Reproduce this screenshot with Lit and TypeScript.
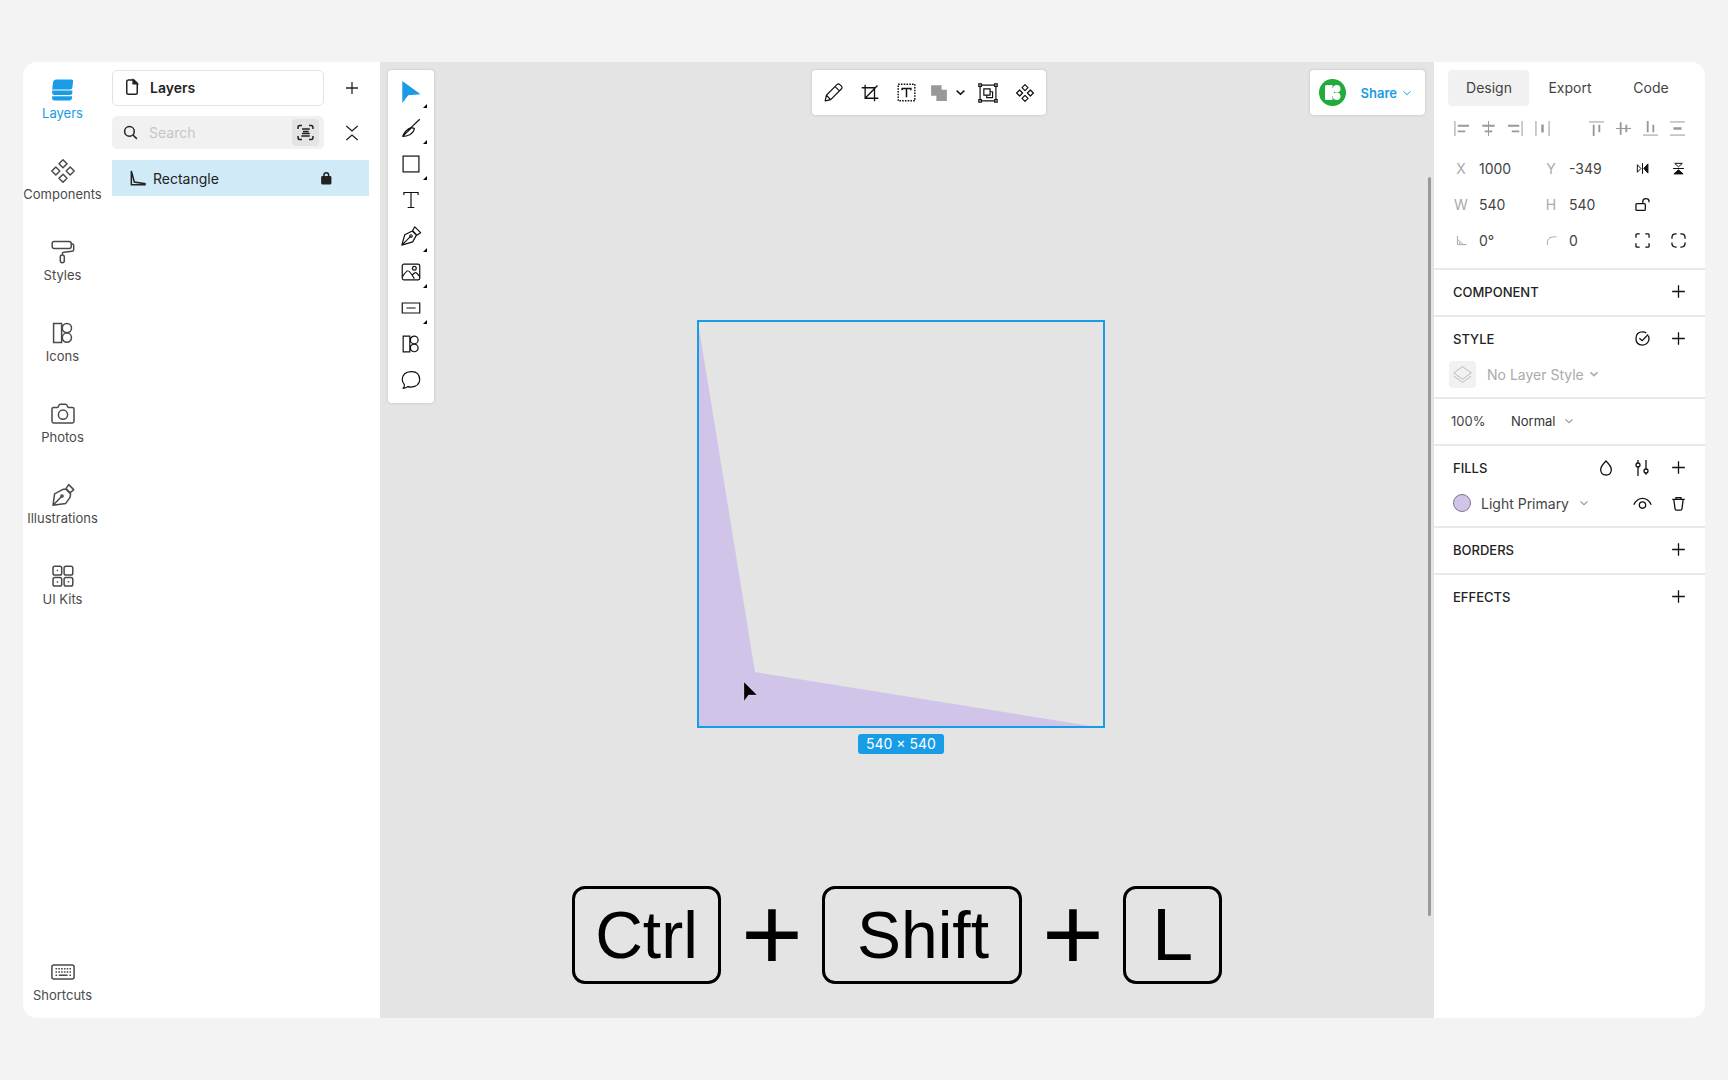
import { LitElement, html, css, svg, type TemplateResult } from "lit";
import { customElement, property, state } from "lit/decorators.js";

const kitTile = svg`<path d="M2.6 2.5h8v19h-8zM15.900 2.500a4.600 4.600 0 1 1 0 9.200 4.600 4.600 0 0 1 0-9.200zM15.900 12.100a4.600 4.600 0 1 1 0 9.200 4.600 4.600 0 0 1 0-9.200z"/>`;
const diamonds = svg`<path d="M12 .8l4 4-4 4-4-4zM12 15.200l4 4-4 4-4-4zM4.800 8l4 4-4 4-4-4zM19.200 8l4 4-4 4-4-4z" stroke-linejoin="round"/>`;

const ICONS: Record<string, TemplateResult> = {
  layers: svg`<g fill="currentColor" stroke="none"><path d="M5.500 1.500H20q2.500 0 2 2.500l-.6 5.500q-.3 1.900-2.400 1.900H1.200L2 4.500q.4-3 3.500-3z"/><path d="M1.100 12.600H21.500l-.3 2.600q-.3 1.900-2.400 1.900H3.500q-2.400 0-2.400-2.400z"/><path d="M1.100 18.300H21.200l-.3 2.200q-.4 2-2.500 2H3.500q-2.400 0-2.400-2.200z"/></g>`,
  components: diamonds,
  styles: svg`<rect x="1.200" y="1.500" width="19" height="7" rx="2"/><path d="M20.200 4h1q1.500 0 1.500 1.600v4q0 1.500-1.500 1.700l-8.500 1q-1.300.2-1.300 1.400v1.300"/><rect x="9.300" y="15" width="4" height="7.800" rx="2"/>`,
  icons: kitTile,
  photos: svg`<path d="M2.600 5.500h3.600q.8 0 1.100-.8l.4-1Q8.200 2.300 9.500 2.300h5q1.300 0 1.800 1.400l.4 1q.3.800 1.100.800h3.600q1.600 0 1.600 1.600v12.200q0 1.600-1.600 1.600H2.600Q1 20.900 1 19.300V7.100q0-1.600 1.600-1.600z"/><circle cx="12" cy="12.700" r="4.600"/>`,
  illustrations: svg`<path d="M2 22.300l1.600-11.500 7.800-4.200 3.400-.5 4.800 5-.6 3.300-4.200 6zM2 22.300l8.600-8.800M15 5.600l2.700-4 5 5-3.500 3.200z" stroke-linejoin="round"/><circle cx="11" cy="13" r="1.100"/>`,
  kits: svg`<rect x="2" y="2.300" width="8.700" height="8.700" rx="1.800"/><rect x="13.100" y="2.300" width="8.700" height="8.700" rx="1.800"/><rect x="2" y="13.400" width="8.700" height="8.700" rx="1.800"/><rect x="13.100" y="13.400" width="8.700" height="8.700" rx="1.800"/><path d="M5.700 6.600h1.400M5.700 18h1.400M16.700 17.700h1.500"/>`,
  keyboard: svg`<rect x=".9" y="5" width="22.200" height="14" rx="2"/><path d="M4.500 8.800h15.500M4.500 12h15.500" stroke-dasharray="1.600 1.200"/><path d="M4.500 15.200h1.600M7.800 15.200h8.800M18.400 15.200H20"/>`,
  file: svg`<path d="M6.500 2.500h8L19 7v12.500q0 2-2 2H7q-2 0-2-2V4.500q0-2 2-2z"/><path d="M13.500 2.500v5h5.500z" fill="currentColor"/>`,
  plus: svg`<path d="M12 4v16M4 12h16"/>`,
  search: svg`<circle cx="10.500" cy="10.500" r="6.800"/><path d="M15.500 15.500l5.500 5.500"/>`,
  scan: svg`<path d="M1.500 7V4.500q0-2.500 2.500-2.500h3M17 2h3q2.500 0 2.500 2.500V7M22.500 17v2.500q0 2.500-2.500 2.500h-3M7 22H4q-2.500 0-2.500-2.500V17M7 7h11M8.500 10.500h8M7 13.500h11M6 17h12"/>`,
  collapse: svg`<path d="M3.500 1.500L12 9l8.500-7.500M3.500 22.500L12 15l8.500 7.500"/>`,
  lock: svg`<rect x="5" y="10" width="15" height="12" rx="1" fill="currentColor"/><path d="M8.500 10V7q0-4 4-4t4 4v3"/>`,
  corner: svg`<path d="M2 1.500v20.500h20.500v-1.500L6.500 18z"/>`,
  cursor: svg`<path d="M2.500 0v24l6.500-8.500 13.500-1z" fill="currentColor" stroke="none"/>`,
  knife: svg`<path d="M22.500 1.500L11 12.500M2 22q3-7.500 10-10.500l4 1q-.5 4.500-5.500 7.500-4 2-8.500 2zM2 22l10-9.500" stroke-linejoin="round"/>`,
  square: svg`<rect x="2.500" y="2.500" width="19" height="19"/>`,
  text: svg`<path d="M3.500 6V3h17v3M12 3v18M8 21h8"/>`,
  pen: svg`<path d="M1 23L4.500 10.500l9-4.500 5 5-4.500 8zM1 23L11.500 12.500M14 5.500l2.500-4.500L23.500 8l-4.500 3z" stroke-linejoin="round"/><circle cx="12" cy="12" r="1.500"/>`,
  image: svg`<rect x="1.500" y="2.500" width="21" height="19" rx="2"/><circle cx="16" cy="7.500" r="2.300"/><path d="M1.500 18q5-8 7-7.500 2 .2 7.500 9.500M13 16q3-3.500 4.500-3.300 1.500 0 5 5"/>`,
  button: svg`<path d="M1.500 6h21v12h-21zM6.500 12h11"/>`,
  comment: svg`<path d="M2.500 22q2-1.500 1.500-4.500-2.500-3-2.500-6Q2 2.500 12 2t10.500 9.500Q22 20 12 20.500q-1.800 0-3.500-.6-2.500 2-6 2.100z" stroke-linejoin="round"/>`,
  pencil: svg`<path d="M1.500 22.500l1.500-7L17 1.500q1.500-1 3 .5l2 2q1.500 1.500.5 3L8.500 21zM14 4.500l5.500 5.500M3 15.500l5.500 5.500" stroke-linejoin="round"/>`,
  crop: svg`<path d="M1 5H18v18M5.500 1V19h17.500M5.500 19L22 2"/>`,
  textbox: svg`<rect x="1.500" y="1.500" width="21" height="21" stroke-dasharray="2 1.500"/><path d="M6.500 9V7h11v2M12 7v11"/>`,
  union: svg`<path d="M1.500 1.500h14v6h7v15h-14v-7h-7z" fill="#999" stroke="none"/>`,
  frame: svg`<path d="M2.500 2.500h19v19h-19z"/><path d="M7 7h7.500v7.500H7zM10.500 14.500v3h7v-7h-3"/><g fill="#fff"><path d="M1 1h3v3H1zM20 1h3v3h-3zM1 20h3v3H1zM20 20h3v3h-3z"/></g>`,
  chevron: svg`<path d="M3.500 8l8.500 8 8.500-8"/>`,
  alignL: svg`<path d="M1.500 0v24"/><path d="M6 7.500h18M6 16.500h12" stroke-width="3"/>`,
  alignC: svg`<path d="M12 0v24"/><path d="M2 7.500h20M6 16.500h12" stroke-width="3"/>`,
  alignR: svg`<path d="M22.500 0v24"/><path d="M0 7.500h18M6 16.500h12" stroke-width="3"/>`,
  spreadH: svg`<path d="M1.500 0v24M22.500 0v24"/><path d="M12 5.500v13" stroke-width="4"/>`,
  flipH: svg`<path d="M2.500 5v14L9 12zM12 2v20"/><path d="M22 3.500v17L14.500 12z" fill="currentColor"/>`,
  unlock: svg`<rect x="1.500" y="10.500" width="15" height="11" rx="1.500"/><path d="M12.500 10.500V7q0-4.500 5-4.500t5 4.500v1.500"/>`,
  angle: svg`<path d="M3 2v19h20M3 9l13 12M9 15l-1.500 6"/>`,
  radius: svg`<path d="M3 22V18Q3 4 17 4h6"/>`,
  corners: svg`<path d="M1.500 7.500V3q0-1.500 1.500-1.500h4.500M16.500 1.500H21q1.500 0 1.500 1.500v4.500M22.500 16.500V21q0 1.500-1.500 1.500h-4.500M7.500 22.500H3q-1.500 0-1.500-1.500v-4.500"/>`,
  rounded: svg`<path d="M1.500 9V7.500q0-6 6-6H9M15 1.500h1.500q6 0 6 6V9M22.500 15v1.500q0 6-6 6H15M9 22.500H7.500q-6 0-6-6V15"/>`,
  check: svg`<path d="M21.500 7.500q1.800 4.500 0 9Q18.500 22.500 12 22.500 1.500 22 1.500 12 2 1.500 12 1.500q3.500 0 6 1.800M7 11.500l4.500 4L21 5.500"/>`,
  stack: svg`<path d="M12 2l11 8-11 8-11-8zM1 14l11 8 11-8" stroke-linejoin="round"/>`,
  drop: svg`<path d="M12 1.500Q4 9.500 4 14.500q.5 8 8 8t8-8q0-5-8-13z"/>`,
  sliders: svg`<path d="M6 0v4.500M6 10v14M18 0v13.500M18 19v3"/><circle cx="6" cy="7.500" r="3"/><circle cx="18" cy="16.500" r="3"/>`,
  eye: svg`<path d="M1 13.500Q5 5.500 12 5.500t11 8"/><circle cx="12" cy="14" r="4"/>`,
  trash: svg`<path d="M2 5.500h20M8 5V2.500h8V5M4.500 5.500l2 15q.3 2 2 2h7q1.700 0 2-2l2-15"/>`,
};

@customElement("ui-icon")
class UiIcon extends LitElement {
  @property() name = "";
  @property({ type: Number }) size = 18;
  @property({ type: Number }) weight = 1.5;
  @property({ type: Boolean }) swap = false;

  static styles = css`
    :host { display: inline-flex; flex: none; }
    svg { display: block; overflow: visible; fill: none; stroke: currentColor; }
  `;

  render() {
    return html`<svg width=${this.size} height=${this.size} viewBox="0 0 24 24" stroke-width=${(this.weight * 24) / this.size} aria-hidden="true">
      <g transform=${this.swap ? "matrix(0 1 1 0 0 0)" : "matrix(1 0 0 1 0 0)"}>${ICONS[this.name]}</g>
    </svg>`;
  }
}

const shared = css`
  * { box-sizing: border-box; }
  button { font: inherit; color: inherit; background: none; border: 0; padding: 0; margin: 0; display: flex; align-items: center; justify-content: center; cursor: pointer; }
  input { font: inherit; color: inherit; background: none; border: 0; padding: 0; margin: 0; min-width: 0; outline: none; }
`;

@customElement("side-nav")
class SideNav extends LitElement {
  @state() private active = "Layers";

  private items = [
    ["layers", "Layers"],
    ["components", "Components"],
    ["styles", "Styles"],
    ["icons", "Icons"],
    ["photos", "Photos"],
    ["illustrations", "Illustrations"],
    ["kits", "UI Kits"],
  ];

  static styles = [shared, css`
    :host { display: block; }
    .nav { display: flex; flex-direction: column; height: 100%; width: 79px; padding: 16px 0 15px; gap: 38px; color: #4a4a4a; }
    .item { flex-direction: column; gap: 3px; height: 43px; font-size: 13px; line-height: 16px; white-space: nowrap; }
    .active { color: #189ce6; }
    .last { margin-top: auto; }
  `];

  render() {
    return html`<nav class="nav">
      ${this.items.map(([icon, label]) => html`
        <button class="item ${label === this.active ? "active" : ""}" @click=${() => (this.active = label)}>
          <ui-icon name=${icon} size="24"></ui-icon>${label}
        </button>`)}
      <button class="item last"><ui-icon name="keyboard" size="24"></ui-icon>Shortcuts</button>
    </nav>`;
  }
}

@customElement("layers-panel")
class LayersPanel extends LitElement {
  static styles = [shared, css`
    :host { display: block; font-size: 14px; }
    .panel { display: grid; grid-template-columns: minmax(0, 1fr) 45px; row-gap: 10px; padding: 8px 11px 8px 10px; width: 278px; color: #222; }
    .page { height: 36px; border: 1px solid #e2e2e2; border-radius: 5px; justify-content: flex-start; gap: 9px; padding: 0 10px 2px; font-weight: 600; }
    .search { display: flex; align-items: center; gap: 10px; height: 33px; border-radius: 5px; background: #f1f1f1; padding: 0 5px 0 10px; }
    .search input { flex: 1; }
    .search input::placeholder { color: #c6c6c6; opacity: 1; }
    .scan { width: 27px; height: 27px; border-radius: 4px; background: #e4e4e4; }
    .side { padding-left: 10px; }
    .row { grid-column: 1 / -1; display: flex; align-items: center; gap: 7px; height: 36px; margin-top: 1px; padding: 0 36px 0 18px; background: #d1eaf8; }
    .name { flex: 1; text-align: left; justify-content: flex-start; }
  `];

  render() {
    return html`<section class="panel" aria-label="Layers">
      <button class="page"><ui-icon name="file" size="18"></ui-icon>Layers</button>
      <button class="side" aria-label="Add page"><ui-icon name="plus" weight="1.3"></ui-icon></button>
      <div class="search">
        <ui-icon name="search" size="17"></ui-icon>
        <input type="text" placeholder="Search" aria-label="Search layers" />
        <button class="scan" aria-label="Filter"><ui-icon name="scan" size="17"></ui-icon></button>
      </div>
      <button class="side" aria-label="Collapse all"><ui-icon name="collapse" size="16" weight="1.3"></ui-icon></button>
      <div class="row">
        <ui-icon name="corner" size="16"></ui-icon>
        <button class="name">Rectangle</button>
        <button aria-label="Locked"><ui-icon name="lock" size="14"></ui-icon></button>
      </div>
    </section>`;
  }
}

@customElement("design-canvas")
class DesignCanvas extends LitElement {
  private tools: [string, string, boolean][] = [
    ["cursor", "Select", true],
    ["knife", "Slice", true],
    ["square", "Shape", true],
    ["text", "Text", false],
    ["pen", "Pen", true],
    ["image", "Image", true],
    ["button", "Elements", true],
    ["icons", "Icons", false],
    ["comment", "Comment", false],
  ];

  static styles = [shared, css`
    :host { display: block; position: relative; background: #e4e4e4; overflow: hidden; color: #111; }
    .bar { position: absolute; top: 8px; display: flex; align-items: center; background: #fff; border-radius: 4px; box-shadow: 0 0 3px rgba(0, 0, 0, 0.16); }
    .tools { left: 8px; flex-direction: column; width: 46px; padding: 4px 0 5px; }
    .tool { position: relative; width: 46px; height: 36px; }
    .more::after { content: ""; position: absolute; right: 7px; bottom: 2px; border: 2px solid #000; border-top-color: transparent; border-left-color: transparent; }
    .first { color: #189ce6; }
    .actions { left: calc(50% + 22px); transform: translateX(-50%); height: 45px; padding: 0 12px; gap: 18px; }
    .combine { display: flex; align-items: center; gap: 7px; margin: 0 -6px 0 -4px; }
    .share { right: 9px; height: 45px; padding: 0 13px 0 9px; gap: 15px; color: #189ce6; font-size: 13px; font-weight: 600; }
    .share button { gap: 5px; }
    .sheet { position: absolute; left: 317px; top: 258px; width: 408px; }
    .shape { display: block; width: 100%; }
    .size { position: absolute; left: 50%; top: 414px; transform: translateX(-50%); padding: 0 8px; border-radius: 3px; background: #189ce6; color: #fff; font-size: 14px; line-height: 20px; white-space: nowrap; }
    .pointer { position: absolute; left: 46px; top: 361px; }
    .keys { position: absolute; left: calc(50% - 10px); bottom: 34px; transform: translateX(-50%); display: flex; align-items: center; gap: 20px; color: #000; font-family: "Liberation Sans", Arial, sans-serif; font-size: 66px; }
    .key { display: flex; align-items: center; justify-content: center; height: 98px; border: 3px solid #000; border-radius: 13px; font: inherit; }
    .ctrl { width: 149px; }
    .shift { width: 200px; padding-left: 2px; }
    .letter { width: 99px; font-size: 74px; }
    .join { width: 61px; text-align: center; font-size: 106px; line-height: 96px; padding-bottom: 3px; }
    .scroll { position: absolute; right: 3px; top: 115px; bottom: 102px; width: 3px; border-radius: 2px; background: #999; }
  `];

  render() {
    return html`
      <div class="sheet">
        <svg class="shape" viewBox="0 0 408 408" role="img" aria-label="Rectangle">
          <path d="M1 2L58 352 400 407H1z" fill="#d1c4e9" />
          <rect x="1" y="1" width="406" height="406" fill="none" stroke="#189ce6" stroke-width="2" />
        </svg>
        <div class="size">540 × 540</div>
        <svg class="pointer" width="15" height="21" viewBox="0 0 15 21" aria-hidden="true"><path d="M1 1v19l4.500-6H14z" fill="#000" stroke="#fff" stroke-opacity=".4" stroke-width=".6" /></svg>
      </div>
      <div class="bar tools" role="toolbar" aria-label="Tools">
        ${this.tools.map(([icon, label, more], i) => html`
          <button class="tool ${more ? "more" : ""} ${i === 0 ? "first" : ""}" aria-label=${label}>
            <ui-icon name=${icon} size=${i === 0 ? 22 : 20} weight="1.2"></ui-icon>
          </button>`)}
      </div>
      <div class="bar actions" role="toolbar" aria-label="Actions">
        <button aria-label="Edit"><ui-icon name="pencil" size="19" weight="1.2"></ui-icon></button>
        <button aria-label="Crop"><ui-icon name="crop" size="18" weight="1.3"></ui-icon></button>
        <button aria-label="Text bounds"><ui-icon name="textbox" size="19"></ui-icon></button>
        <div class="combine">
          <button aria-label="Union"><ui-icon name="union" size="18"></ui-icon></button>
          <button aria-label="More combine modes"><ui-icon name="chevron" size="11"></ui-icon></button>
        </div>
        <button aria-label="Frame"><ui-icon name="frame" size="20" weight="1.2"></ui-icon></button>
        <button aria-label="Create component"><ui-icon name="components" size="18" weight="1.2"></ui-icon></button>
      </div>
      <div class="bar share">
        <svg width="27" height="27" viewBox="0 0 27 27" role="img" aria-label="Account">
          <circle cx="13.500" cy="13.500" r="13.500" fill="#22aa3a" />
          <path d="M7.500 6h6v15h-6q-1.500 0-1.500-1.500v-12Q6 6 7.500 6z" fill="#fff" />
          <path d="M13 9h2v8h-2z" fill="#fff" />
          <circle cx="17.700" cy="9.800" r="3.800" fill="#fff" /><circle cx="17.700" cy="17.200" r="3.800" fill="#fff" />
        </svg>
        <button>Share <ui-icon name="chevron" size="10" weight="1"></ui-icon></button>
      </div>
      <div class="keys">
        <kbd class="key ctrl">Ctrl</kbd><span class="join">+</span>
        <kbd class="key shift">Shift</kbd><span class="join">+</span>
        <kbd class="key letter">L</kbd>
      </div>
      <div class="scroll"></div>
    `;
  }
}

@customElement("inspector-panel")
class InspectorPanel extends LitElement {
  @state() private tab = "Design";

  static styles = [shared, css`
    :host { display: block; font-size: 14px; color: #444; }
    .panel { width: 271px; }
    .top { padding: 8px 14px 0; }
    .tabs { display: grid; grid-template-columns: repeat(3, 1fr); height: 36px; }
    .tab { border-radius: 4px; padding: 0 0 2px 1px; }
    .on { background: #f1f1f1; }
    .aligns { display: grid; grid-template-columns: repeat(4, 27px) 1fr repeat(4, 27px); height: 44px; color: #999; }
    .fields { display: grid; grid-template-columns: 90px 1fr 36px 36px; grid-auto-rows: 36px; align-items: center; color: #111; padding: 0 9px 10px 14px; }
    .field { display: grid; grid-template-columns: 26px 1fr; column-gap: 5px; align-items: center; color: #aaa; text-align: center; }
    .field ui-icon { justify-self: center; }
    .field input { color: #444; width: 100%; }
    .group { border-top: 2px solid #e9e9e9; padding: 0 9px 0 19px; }
    .head { display: flex; align-items: center; height: 45px; padding-bottom: 2px; }
    .title { flex: 1; margin: 0; font-size: 13px; font-weight: 500; color: #222; }
    .act { width: 36px; height: 26px; color: #111; }
    .line { display: flex; align-items: center; height: 26px; margin: -1px 0 10px; gap: 10px; }
    .drop { gap: 10px; }
    .none { color: #aaa; gap: 5px; }
    .chip { width: 27px; height: 27px; margin: 0 1px 0 -4px; border-radius: 4px; background: #f1f1f1; color: #bbb; }
    .swatch { width: 18px; height: 18px; border-radius: 50%; border: 1px solid #7d768c; background: #d1c4e9; }
    .push { flex: 1; }
    .acts { display: flex; }
    .blend { height: 45px; margin: 0; padding-bottom: 2px; font-size: 13px; }
    .pct { width: 50px; margin-left: -2px; }
    .blend .drop { gap: 8px; color: #333; }
    .soft { color: #999; }
  `];

  private field(id: string, label: string, value: string, icon = "") {
    return html`<label class="field" for=${id}>
      ${icon ? html`<ui-icon name=${icon} size="11" weight="1"></ui-icon>` : html`<span>${label}</span>`}
      <input id=${id} type="text" .value=${value} aria-label=${label} />
    </label>`;
  }

  private act(icon: string, label: string, size = 15, weight = 1.3, swap = false) {
    return html`<button class="act" aria-label=${label}><ui-icon name=${icon} size=${size} weight=${weight} ?swap=${swap}></ui-icon></button>`;
  }

  private align(icon: string, label: string, swap = false) {
    return html`<button aria-label=${label}><ui-icon name=${icon} size="15" weight="1" ?swap=${swap}></ui-icon></button>`;
  }

  private simple(title: string) {
    return html`<section class="group"><div class="head"><h2 class="title">${title}</h2>${this.act("plus", `Add ${title.toLowerCase()}`, 19)}</div></section>`;
  }

  render() {
    return html`<aside class="panel">
      <div class="top">
        <div class="tabs" role="tablist">
          ${["Design", "Export", "Code"].map((t) => html`
            <button class="tab ${t === this.tab ? "on" : ""}" role="tab" aria-selected=${t === this.tab} @click=${() => (this.tab = t)}>${t}</button>`)}
        </div>
        <div class="aligns">
          ${this.align("alignL", "Align left")}${this.align("alignC", "Align centre")}${this.align("alignR", "Align right")}${this.align("spreadH", "Distribute horizontally")}
          <span></span>
          ${this.align("alignL", "Align top", true)}${this.align("alignC", "Align middle", true)}${this.align("alignR", "Align bottom", true)}${this.align("spreadH", "Distribute vertically", true)}
        </div>
      </div>
      <div class="fields">
        ${this.field("x", "X", "1000")}${this.field("y", "Y", "-349")}
        ${this.act("flipH", "Flip horizontally", 13, 1)}${this.act("flipH", "Flip vertically", 13, 1, true)}
        ${this.field("w", "W", "540")}${this.field("h", "H", "540")}
        ${this.act("unlock", "Lock proportions", 15)}<span></span>
        ${this.field("rotation", "Rotation", "0°", "angle")}${this.field("radius", "Radius", "0", "radius")}
        ${this.act("corners", "Corners", 15)}${this.act("rounded", "Rounded corners", 15)}
      </div>
      ${this.simple("COMPONENT")}
      <section class="group">
        <div class="head"><h2 class="title">STYLE</h2>${this.act("check", "Apply style", 15)}${this.act("plus", "Add style", 19)}</div>
        <div class="line">
          <button class="chip" aria-label="Layer styles"><ui-icon name="stack" size="19" weight="1"></ui-icon></button>
          <button class="drop none">No Layer Style <ui-icon name="chevron" size="10"></ui-icon></button>
        </div>
      </section>
      <section class="group">
        <div class="line blend">
          <input class="pct" type="text" .value=${"100%"} aria-label="Opacity" />
          <button class="drop">Normal <ui-icon class="soft" name="chevron" size="10" weight="1.2"></ui-icon></button>
        </div>
      </section>
      <section class="group">
        <div class="head"><h2 class="title">FILLS</h2>${this.act("drop", "Fill colour", 16)}${this.act("sliders", "Adjust fill", 16)}${this.act("plus", "Add fill", 19)}</div>
        <div class="line">
          <button class="swatch" aria-label="Fill swatch"></button>
          <button class="drop">Light Primary <ui-icon class="soft" name="chevron" size="10" weight="1.2"></ui-icon></button>
          <span class="push"></span>
          <div class="acts">${this.act("eye", "Hide fill", 19)}${this.act("trash", "Delete fill", 15)}</div>
        </div>
      </section>
      ${this.simple("BORDERS")}
      ${this.simple("EFFECTS")}
    </aside>`;
  }
}

@customElement("app-root")
class AppRoot extends LitElement {
  static styles = css`
    :host { display: flex; box-sizing: border-box; min-height: 100vh; padding: 62px 23px; background: #f3f3f3; font-family: Inter, "Liberation Sans", sans-serif; }
    .app { flex: 1; display: grid; grid-template-columns: auto auto 1fr auto; background: #fff; border-radius: 14px; overflow: hidden; }
  `;

  render() {
    return html`<main class="app">
      <side-nav></side-nav>
      <layers-panel></layers-panel>
      <design-canvas></design-canvas>
      <inspector-panel></inspector-panel>
    </main>`;
  }
}
